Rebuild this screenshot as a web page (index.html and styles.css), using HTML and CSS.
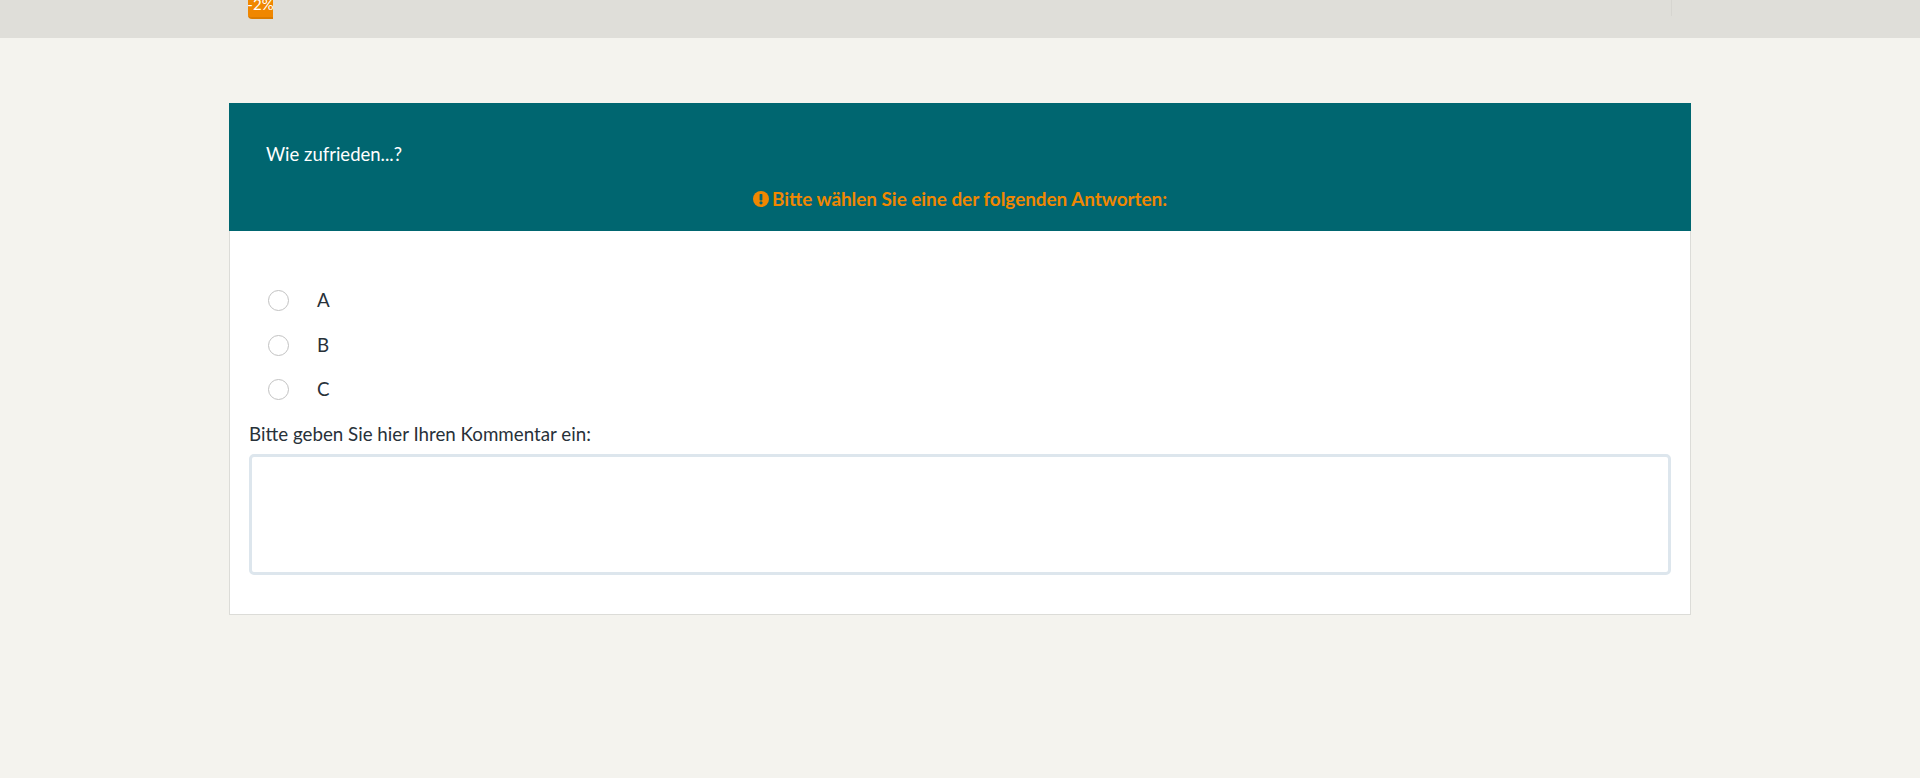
FILE: index.html
```html
<!DOCTYPE html>
<html lang="de">
<head>
<meta charset="utf-8">
<title>Umfrage</title>
<link rel="stylesheet" href="styles.css">
</head>
<body>
<header class="topbar">
  <span class="badge"><span class="badge-text">-2%</span></span>
  <span class="divider"></span>
</header>
<main class="page">
  <section class="card">
    <div class="card-head">
      <div class="question">Wie zufrieden...?</div>
      <div class="notice">
        <svg class="notice-icon" viewBox="0 0 16 16" aria-hidden="true"><circle cx="8" cy="8" r="8" fill="#f08700"/><rect x="6.6" y="3" width="2.8" height="6.4" rx="0.7" fill="#006670"/><circle cx="8" cy="11.8" r="1.6" fill="#006670"/></svg>
        <span>Bitte wählen Sie eine der folgenden Antworten:</span>
      </div>
    </div>
    <div class="card-body">
      <ul class="options">
        <li class="option"><span class="radio"></span><span class="option-label">A</span></li>
        <li class="option"><span class="radio"></span><span class="option-label">B</span></li>
        <li class="option"><span class="radio"></span><span class="option-label">C</span></li>
      </ul>
      <label class="comment-label" for="comment">Bitte geben Sie hier Ihren Kommentar ein:</label>
      <textarea class="comment" id="comment"></textarea>
    </div>
  </section>
</main>
</body>
</html>
```
FILE: styles.css
```css
* { box-sizing: border-box; }
html, body { margin: 0; height: 100%; }
body {
  background: #f4f3ee;
  font-family: Lato, "Liberation Sans", sans-serif;
  font-size: 18.75px;
  color: #283139;
  overflow: hidden;
}
.topbar {
  height: 38px;
  background: #dfded9;
  display: flex;
  align-items: flex-start;
  justify-content: space-between;
  padding: 0 248px 0 248px;
}
.badge {
  width: 25px;
  height: 19px;
  background: #f08700;
  border-bottom: 2px solid #dc7c00;
  border-radius: 0 0 0 4px;
  color: #fff;
  display: flex;
  justify-content: center;
  align-items: flex-end;
  overflow: hidden;
}
.badge-text { font-size: 15px; line-height: 15px; margin-bottom: 5px; }
.divider { width: 1px; height: 16px; background: #d6d5d0; }
.page { padding: 65px 229px 0 229px; }
.card-head {
  background: #006670;
  color: #fff;
  height: 128px;
  padding: 39px 37px 0;
}
.question { line-height: 24px; font-size: 18.5px; }
.notice {
  margin-top: 21px;
  line-height: 24px;
  font-size: 18.85px;
  color: #f08700;
  font-weight: 700;
  display: flex;
  justify-content: center;
  align-items: center;
  gap: 3px;
}
.notice-icon { width: 16px; height: 16px; }
.card-body {
  background: #fff;
  border: 1px solid #dcdcd8;
  border-top: 0;
  height: 384px;
  padding: 47.25px 19px 0;
}
.options { list-style: none; margin: 0; padding: 0; }
.option {
  height: 44.5px;
  display: flex;
  align-items: center;
  padding-left: 19px;
}
.radio {
  width: 21px;
  height: 21px;
  border: 1px solid #c2c2c2;
  border-radius: 50%;
  background: #fff;
}
.option-label { margin-left: 28px; margin-top: -0.5px; line-height: 24px; }
.comment-label { display: block; line-height: 24px; margin-top: 9.75px; }
.comment {
  display: block;
  width: 100%;
  height: 121px;
  margin-top: 8px;
  border: 3px solid #dde6ed;
  border-radius: 5px;
  background: #fff;
  resize: none;
  outline: none;
}
```
